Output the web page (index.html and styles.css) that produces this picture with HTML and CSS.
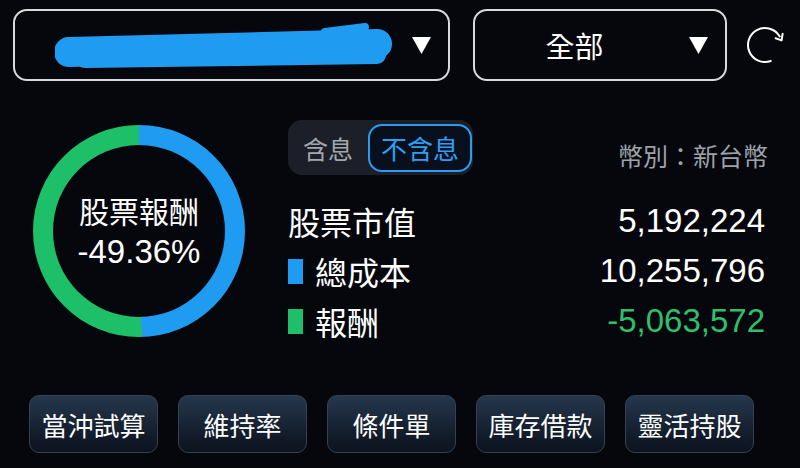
FILE: index.html
```html
<!DOCTYPE html>
<html lang="zh-Hant">
<head>
<meta charset="utf-8">
<link rel="stylesheet" href="styles.css">
</head>
<body>
<div class="page">
  <header class="top">
    <div class="select select-account">
      <svg class="scribble" width="340" height="56" viewBox="0 0 340 56">
        <path d="M14 35 L322 27" stroke="#1f9bf1" stroke-width="30" stroke-linecap="round" fill="none"/>
        <path d="M30 42 L322 38" stroke="#1f9bf1" stroke-width="18" stroke-linecap="round" fill="none"/>
        <path d="M270 15 L310 10" stroke="#1f9bf1" stroke-width="8" stroke-linecap="round" fill="none"/>
      </svg>
      <svg class="caret" width="19" height="18" viewBox="0 0 19 18"><polygon points="0,1 19,1 9.5,18" fill="#fff"/></svg>
    </div>
    <div class="select select-filter">
      <span class="select-text">全部</span>
      <svg class="caret" width="19" height="18" viewBox="0 0 19 18"><polygon points="0,1 19,1 9.5,18" fill="#fff"/></svg>
    </div>
    <svg class="refresh" width="48" height="48" viewBox="0 0 48 48">
      <path d="M29.8 40 A17 17 0 1 1 38.7 15.5" stroke="#fff" stroke-width="2" fill="none" stroke-linecap="round"/>
      <path d="M34.6 17.2 L40.6 19.4 L41.6 12.8" stroke="#fff" stroke-width="2" fill="none" stroke-linecap="round" stroke-linejoin="round"/>
    </svg>
  </header>

  <section class="summary">
    <div class="donut">
      <div class="donut-hole">
        <div class="donut-label">股票報酬</div>
        <div class="donut-value">-49.36%</div>
      </div>
    </div>
    <div class="info">
      <div class="info-head">
        <div class="toggle">
          <span class="toggle-opt">含息</span>
          <span class="toggle-opt active">不含息</span>
        </div>
        <div class="currency">幣別：新台幣</div>
      </div>
      <div class="row">
        <span class="label">股票市值</span>
        <span class="num">5,192,224</span>
      </div>
      <div class="row">
        <span class="label"><i class="swatch blue"></i>總成本</span>
        <span class="num">10,255,796</span>
      </div>
      <div class="row">
        <span class="label"><i class="swatch green"></i>報酬</span>
        <span class="num neg">-5,063,572</span>
      </div>
    </div>
  </section>

  <nav class="actions">
    <button class="btn">當沖試算</button>
    <button class="btn">維持率</button>
    <button class="btn">條件單</button>
    <button class="btn">庫存借款</button>
    <button class="btn">靈活持股</button>
  </nav>
</div>
</body>
</html>
```

FILE: styles.css
```css
html, body {
  margin: 0;
  padding: 0;
  background: #05070d;
}
body {
  width: 800px;
  height: 468px;
  overflow: hidden;
  color: #fff;
  font-family: "Noto Sans CJK TC", "Noto Sans", sans-serif;
}
.page {
  width: 800px;
  height: 468px;
}
.top {
  display: flex;
  align-items: center;
  padding: 9px 0 0 13px;
}
.select {
  box-sizing: border-box;
  height: 72px;
  border: 2px solid #d9d9db;
  border-radius: 14px;
  display: flex;
  align-items: center;
  padding-right: 17px;
}
.select-account {
  width: 437px;
}
.scribble {
  margin-left: 40px;
  flex: none;
}
.select-account .caret {
  margin-left: auto;
}
.select-filter {
  width: 254px;
  margin-left: 23px;
}
.select-text {
  flex: 1;
  text-align: center;
  font-size: 29px;
  line-height: 40px;
  padding-left: 2px;
}
.caret {
  flex: none;
  margin-left: 17px;
}
.refresh {
  margin-left: 14px;
  flex: none;
}
.summary {
  display: flex;
  align-items: flex-start;
  margin-top: 39px;
}
.donut {
  margin: 5px 0 0 33px;
  width: 212px;
  height: 212px;
  border-radius: 50%;
  background: conic-gradient(#1f9cf2 0deg 178.5deg, #1ebf69 178.5deg 360deg);
  display: flex;
  align-items: center;
  justify-content: center;
  flex: none;
}
.donut-hole {
  width: 172px;
  height: 172px;
  border-radius: 50%;
  background: #05070d;
  display: flex;
  flex-direction: column;
  align-items: center;
  justify-content: center;
  gap: 7px;
}
.donut-label {
  font-size: 30px;
  line-height: 34px;
}
.donut-value {
  font-family: "Liberation Sans", Arial, sans-serif;
  font-size: 33px;
  line-height: 36px;
}
.info {
  margin-left: 43px;
  width: 480px;
}
.info-head {
  display: flex;
  justify-content: space-between;
  align-items: flex-end;
  margin-bottom: 21px;
}
.toggle {
  box-sizing: border-box;
  height: 55px;
  width: 185px;
  background: #1c1f28;
  border-radius: 14px;
  display: flex;
  align-items: center;
  padding: 0 1px 0 15px;
}
.toggle-opt {
  font-size: 25px;
  color: #a3a6ad;
  line-height: 30px;
}
.toggle-opt.active {
  margin-left: auto;
  box-sizing: border-box;
  width: 104px;
  height: 48px;
  border: 2px solid #2a9cf1;
  border-radius: 14px;
  background: #07101c;
  color: #2d9ff3;
  font-size: 26px;
  display: flex;
  align-items: center;
  justify-content: center;
}
.currency {
  font-size: 25px;
  line-height: 30px;
  color: #9da1a8;
  padding-bottom: 5px;
}
.row {
  display: flex;
  justify-content: space-between;
  align-items: center;
  height: 50px;
  padding-right: 3px;
}
.label {
  display: flex;
  align-items: center;
  font-size: 32px;
  line-height: 40px;
}
.swatch {
  display: inline-block;
  width: 15px;
  height: 25px;
  margin-right: 12px;
}
.swatch.blue { background: #1f9cf2; }
.swatch.green { background: #1ebf69; }
.num {
  font-family: "Liberation Sans", Arial, sans-serif;
  font-size: 33px;
  line-height: 40px;
}
.num.neg {
  color: #2fbf6c;
}
.actions {
  display: flex;
  gap: 20px;
  margin-top: 49px;
  padding-left: 29px;
}
.btn {
  box-sizing: border-box;
  width: 129px;
  height: 58px;
  border-radius: 10px;
  border: 1px solid #34414f;
  background: linear-gradient(#26374c, #111a28 75%, #0d1420);
  color: #fff;
  font-family: "Noto Sans CJK TC", "Noto Sans", sans-serif;
  font-size: 26px;
  padding: 0;
  display: flex;
  align-items: center;
  justify-content: center;
}
```
